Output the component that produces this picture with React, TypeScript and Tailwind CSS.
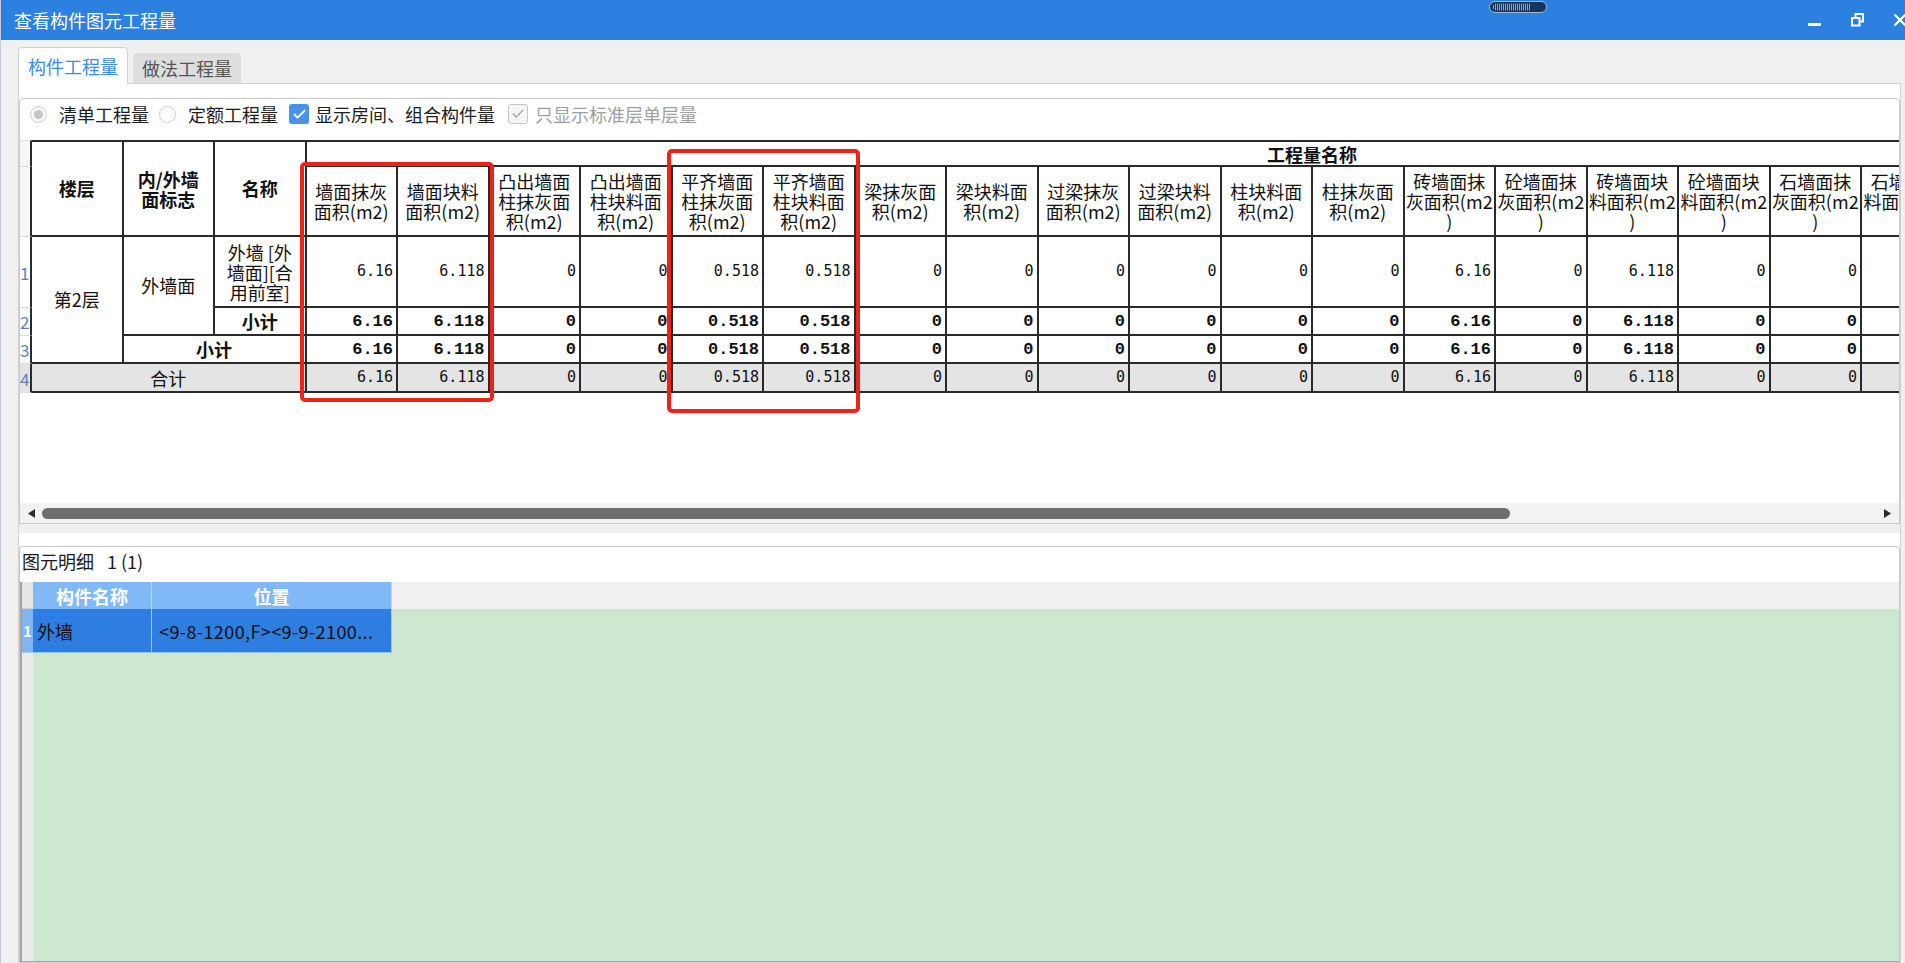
import { Check } from "lucide-react";

type QtyCol = { h: string[]; v: string };

const cols: QtyCol[] = [
  { h: ["墙面抹灰", "面积(m2)"], v: "6.16" },
  { h: ["墙面块料", "面积(m2)"], v: "6.118" },
  { h: ["凸出墙面", "柱抹灰面", "积(m2)"], v: "0" },
  { h: ["凸出墙面", "柱块料面", "积(m2)"], v: "0" },
  { h: ["平齐墙面", "柱抹灰面", "积(m2)"], v: "0.518" },
  { h: ["平齐墙面", "柱块料面", "积(m2)"], v: "0.518" },
  { h: ["梁抹灰面", "积(m2)"], v: "0" },
  { h: ["梁块料面", "积(m2)"], v: "0" },
  { h: ["过梁抹灰", "面积(m2)"], v: "0" },
  { h: ["过梁块料", "面积(m2)"], v: "0" },
  { h: ["柱块料面", "积(m2)"], v: "0" },
  { h: ["柱抹灰面", "积(m2)"], v: "0" },
  { h: ["砖墙面抹", "灰面积(m2", ")"], v: "6.16" },
  { h: ["砼墙面抹", "灰面积(m2", ")"], v: "0" },
  { h: ["砖墙面块", "料面积(m2", ")"], v: "6.118" },
  { h: ["砼墙面块", "料面积(m2", ")"], v: "0" },
  { h: ["石墙面抹", "灰面积(m2", ")"], v: "0" },
  { h: ["石墙面块", "料面积(m2", ")"], v: "0" },
  { h: ["其他墙面", "抹灰面积", "(m2)"], v: "0" },
  { h: ["其他墙面", "块料面积", "(m2)"], v: "0" },
  { h: ["墙面抹灰", "长度(m)"], v: "0" },
  { h: ["墙面块料", "长度(m)"], v: "0" },
];

const cell = "p-0 border-r-2 border-b-2 border-[#2a2a2a] align-middle";
const rowNum =
  "p-0 pr-[1px] border-r-2 border-b border-r-[#2a2a2a] border-b-[#dcdcdc] text-right align-middle text-[17px] leading-none text-[#5b84bd] overflow-hidden whitespace-nowrap";
const numNormal = "font-['DejaVu_Sans_Mono',monospace] text-[15px]";
const numBold = "font-['Liberation_Mono',monospace] font-bold text-[17px]";

function TitleBar() {
  return (
    <div className="relative flex h-[40px] items-center overflow-hidden bg-[#2c80e0] pl-[13px]">
      <span className="text-[18px] leading-none text-white">查看构件图元工程量</span>
      {/* little progress widget */}
      <svg className="absolute left-[1488px] top-[1px]" width="58" height="12" viewBox="0 0 58 12">
        <rect x="0.5" y="0.5" width="57" height="11" rx="5.5" fill="#16345e" stroke="#9db6d6" />
        {Array.from({ length: 19 }).map((_, i) => (
          <rect key={i} x={4 + i * 2} y={i === 0 ? 4 : 2.5} width="1" height={i === 0 ? 4 : 7} fill="#3ee04c" />
        ))}
      </svg>
      <div className="ml-auto mr-[-2px] flex items-center">
        <svg width="13" height="14" viewBox="0 0 13 14">
          <rect x="0" y="10" width="13" height="3" fill="#fff" />
        </svg>
        <svg className="ml-[30px]" width="13" height="14" viewBox="0 0 13 14">
          <rect x="4.5" y="1" width="7.5" height="7.5" fill="none" stroke="#fff" strokeWidth="2" />
          <rect x="1" y="5" width="7.5" height="7.5" fill="#2c80e0" stroke="#fff" strokeWidth="2" />
        </svg>
        <svg className="ml-[29px]" width="14" height="14" viewBox="0 0 14 14">
          <path d="M1.5 1.5 L12.5 12.5 M12.5 1.5 L1.5 12.5" stroke="#fff" strokeWidth="2.2" />
        </svg>
      </div>
    </div>
  );
}

function Options() {
  return (
    <div className="flex h-[41px] items-center pb-[11px] text-[18px] leading-none">
      <span className="ml-[10px] flex h-[17px] w-[17px] items-center justify-center rounded-full border border-[#cfcfcf] bg-[#f7f7f7]">
        <span className="h-[9px] w-[9px] rounded-full bg-[#c6c6c6]" />
      </span>
      <span className="ml-[12px] text-[#1c1c1c]">清单工程量</span>
      <span className="ml-[10px] h-[17px] w-[17px] rounded-full border border-[#cfcfcf] bg-white" />
      <span className="ml-[12px] text-[#1c1c1c]">定额工程量</span>
      <span className="ml-[11px] flex h-[20px] w-[20px] items-center justify-center rounded-[3px] bg-[#4a91e8]">
        <Check size={15} strokeWidth={3} color="#fff" />
      </span>
      <span className="ml-[6px] text-[#1c1c1c]">显示房间、组合构件量</span>
      <span className="ml-[13px] flex h-[20px] w-[20px] items-center justify-center rounded-[3px] border border-[#c6c6c6] bg-[#f5f5f5]">
        <Check size={14} strokeWidth={2.5} color="#a9a9a9" />
      </span>
      <span className="ml-[7px] text-[#a0a0a0]">只显示标准层单层量</span>
    </div>
  );
}

function QtyTable() {
  return (
    <table className="table-fixed border-separate border-spacing-0 w-[2299.5px] text-[#111]">
      <colgroup>
        <col className="w-[12px]" />
        {Array.from({ length: 25 }).map((_, i) => (
          <col key={i} className="w-[91.5px]" />
        ))}
      </colgroup>
      <tbody>
        <tr className="h-[27px]">
          <td className={`${rowNum} border-t border-t-[#e2e2e2] bg-[#f7f7f7]`} />
          <td rowSpan={2} className={`${cell} border-t-2 text-center text-[18px] font-bold`}>楼层</td>
          <td rowSpan={2} className={`${cell} border-t-2 text-center text-[18px] leading-[20px] font-bold`}>
            <div>内/外墙</div>
            <div>面标志</div>
          </td>
          <td rowSpan={2} className={`${cell} border-t-2 text-center text-[18px] font-bold`}>名称</td>
          <td colSpan={22} className={`${cell} border-t-2 text-center text-[18px] leading-none font-bold`}>工程量名称</td>
        </tr>
        <tr className="h-[70px]">
          <td className={`${rowNum} bg-[#f7f7f7]`} />
          {cols.map((c, i) => (
            <td key={i} className={`${cell} overflow-hidden text-center text-[18px] leading-[20px]`}>
              {c.h.map((l, j) => (
                <div key={j} className="whitespace-nowrap">{l}</div>
              ))}
            </td>
          ))}
        </tr>
        <tr className="h-[71px]">
          <td className={rowNum}>1</td>
          <td rowSpan={3} className={`${cell} text-center text-[18px]`}>第2层</td>
          <td rowSpan={2} className={`${cell} text-center text-[18px]`}>外墙面</td>
          <td className={`${cell} text-center text-[18px] leading-[20px]`}>
            <div className="whitespace-nowrap">外墙 [外</div>
            <div className="whitespace-nowrap">墙面][合</div>
            <div className="whitespace-nowrap">用前室]</div>
          </td>
          {cols.map((c, i) => (
            <td key={i} className={`${cell} ${numNormal} whitespace-nowrap pr-[3px] text-right`}>{c.v}</td>
          ))}
        </tr>
        <tr className="h-[28px]">
          <td className={rowNum}>2</td>
          <td className={`${cell} text-center text-[18px] font-bold leading-none`}>小计</td>
          {cols.map((c, i) => (
            <td key={i} className={`${cell} ${numBold} whitespace-nowrap pr-[3px] text-right leading-none`}>{c.v}</td>
          ))}
        </tr>
        <tr className="h-[28px]">
          <td className={rowNum}>3</td>
          <td colSpan={2} className={`${cell} text-center text-[18px] font-bold leading-none`}>小计</td>
          {cols.map((c, i) => (
            <td key={i} className={`${cell} ${numBold} whitespace-nowrap pr-[3px] text-right leading-none`}>{c.v}</td>
          ))}
        </tr>
        <tr className="h-[29px] bg-[#e4e4e4]">
          <td className={rowNum}>4</td>
          <td colSpan={3} className={`${cell} text-center text-[18px] leading-none`}>合计</td>
          {cols.map((c, i) => (
            <td key={i} className={`${cell} ${numNormal} whitespace-nowrap pr-[3px] text-right leading-none`}>{c.v}</td>
          ))}
        </tr>
      </tbody>
    </table>
  );
}

function ScrollBar() {
  return (
    <div className="flex h-[20px] items-center bg-[#f2f2f2] pl-[8px] pr-[8px]">
      <svg width="7" height="9" viewBox="0 0 7 9">
        <path d="M7 0 L0 4.5 L7 9 Z" fill="#2b2b2b" />
      </svg>
      <div className="ml-[7px] h-[11px] w-[1468px] rounded-full bg-[#6e6e6e]" />
      <div className="flex-1" />
      <svg width="7" height="9" viewBox="0 0 7 9">
        <path d="M0 0 L7 4.5 L0 9 Z" fill="#2b2b2b" />
      </svg>
    </div>
  );
}

function DetailGrid() {
  return (
    <div className="flex flex-1 border-b border-l-2 border-[#a3a3a3] bg-[#cde8d0]">
      <div className="flex w-[11px] flex-col bg-[#ebebeb]">
        <div className="h-[27px] border-b border-[#d4d4d4] bg-[#e6e6e6]" />
        <div className="flex h-[44px] items-center justify-center border-b border-[#a9cbee] bg-[#7fb6ef] text-[15px] font-bold leading-none text-white">
          1
        </div>
      </div>
      <div className="flex flex-1 flex-col">
        <div className="flex h-[27px] text-[18px] font-bold leading-none text-white">
          <div className="flex w-[119px] items-center justify-center border-r border-[#b7d5f5] bg-[#80b9f6]">构件名称</div>
          <div className="flex w-[240px] items-center justify-center border-r border-[#b7d5f5] bg-[#80b9f6]">位置</div>
          <div className="flex-1 bg-[#f0f0f0]" />
        </div>
        <div className="flex h-[44px] text-[18px] leading-none text-[#111]">
          <div className="flex w-[119px] items-center border-r border-b border-[#9cc3ee] bg-[#2e7de0] pl-[4px]">外墙</div>
          <div className="flex w-[240px] items-center border-r border-b border-[#9cc3ee] bg-[#2e7de0] pl-[7px] tracking-[0.4px] whitespace-nowrap">
            &lt;9-8-1200,F&gt;&lt;9-9-2100...
          </div>
          <div className="flex-1" />
        </div>
      </div>
    </div>
  );
}

export default function App() {
  return (
    <div className="relative h-[963px] w-[1905px] overflow-hidden border-l border-[#c3cbd8] bg-[#f0f0f0] font-['Noto_Sans_CJK_SC',sans-serif] text-[#1a1a1a]">
      <TitleBar />

      <div className="flex h-[43px] items-end pl-[17px]">
        <div className="relative z-10 mb-[-1px] flex h-[37px] w-[110px] items-center justify-center rounded-t-[4px] border border-b-0 border-[#d2d2d2] bg-white text-[18px] leading-none text-[#3b8ce6]">
          构件工程量
        </div>
        <div className="ml-[5px] flex h-[30px] w-[108px] items-center justify-center rounded-t-[4px] bg-[#dedede] text-[18px] leading-none text-[#555]">
          做法工程量
        </div>
      </div>

      <div className="ml-[17px] mr-[4px] flex h-[880px] flex-col border border-[#d2d2d2] bg-white pt-[14px]">
        <div className="flex flex-col rounded-t-[4px] border border-[#c8c8c8]">
          <Options />
          <div className="h-[363px] overflow-hidden bg-white">
            <QtyTable />
          </div>
          <ScrollBar />
        </div>
        <div className="h-[9px] bg-[#f0f0f0]" />
        <div className="h-[13px] bg-white" />
        <div className="flex flex-1 flex-col rounded-t-[4px] border-x border-t border-[#c8c8c8]">
          <div className="flex h-[35px] items-center pb-[8px] pl-[2px] text-[18px] leading-none text-[#1a1a1a]">
            <span>图元明细</span>
            <span className="ml-[13px]">1 (1)</span>
          </div>
          <DetailGrid />
        </div>
      </div>

      {/* red annotation boxes */}
      <div className="absolute left-[299px] top-[162px] h-[240px] w-[194px] rounded-[5px] border-[4px] border-[#ef2219]" />
      <div className="absolute left-[666px] top-[149px] h-[264px] w-[193px] rounded-[5px] border-[4px] border-[#ef2219]" />
    </div>
  );
}
